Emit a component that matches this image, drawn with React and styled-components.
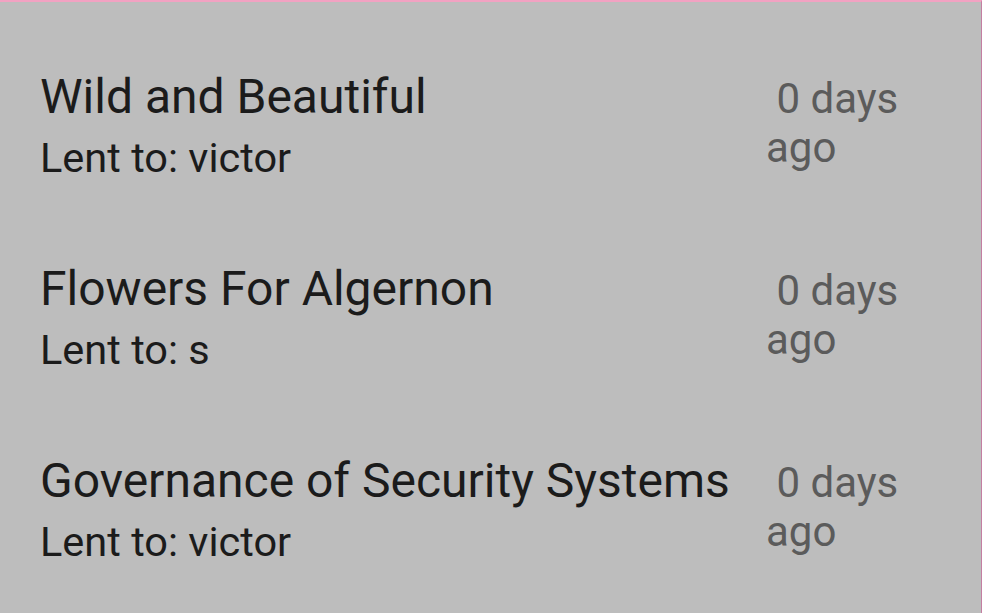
import React from "react";
import styled, { createGlobalStyle } from "styled-components";

const Global = createGlobalStyle`
  html, body { margin: 0; padding: 0; background: #bdbdbd; }
  body { font-family: Roboto, "Noto Sans", sans-serif; }
`;

const Screen = styled.div`
  box-sizing: border-box;
  width: 982px;
  height: 613px;
  background: #bdbdbd;
  border-top: 2px solid #f2a2c2;
  border-right: 1px solid #c47fa2;
  overflow: hidden;
  padding-top: 65px;
`;

const Row = styled.div`
  display: flex;
  align-items: flex-start;
  padding: 0 65px 0 40px;
  height: 192px;
`;

const Info = styled.div`
  flex: 1;
  display: flex;
  flex-direction: column;
`;

const Title = styled.div`
  font-size: 48px;
  line-height: 60px;
  color: #1b1b1b;
`;

const Sub = styled.div`
  font-size: 41.5px;
  line-height: 50px;
  margin-top: 6px;
  color: #1b1b1b;
`;

const Age = styled.div`
  width: 150px;
  font-size: 42px;
  line-height: 49px;
  color: #5b5b5b;
  white-space: pre-wrap;
  margin-top: 7px;
`;

const items = [
  { title: "Wild and Beautiful", to: "victor" },
  { title: "Flowers For Algernon", to: "s" },
  { title: "Governance of Security Systems", to: "victor" },
];

export default function App() {
  return (
    <>
      <Global />
      <Screen>
        {items.map((it) => (
          <Row key={it.title}>
            <Info>
              <Title>{it.title}</Title>
              <Sub>Lent to: {it.to}</Sub>
            </Info>
            <Age>{" 0 days ago"}</Age>
          </Row>
        ))}
      </Screen>
    </>
  );
}
